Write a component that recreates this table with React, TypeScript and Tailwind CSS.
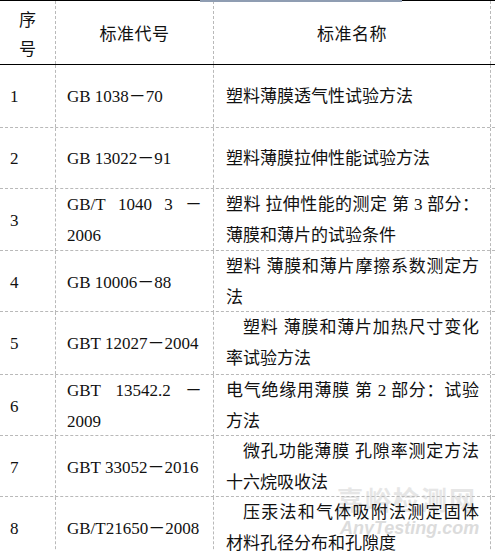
import React from 'react';

type Row = {
  no: string;
  height: string;
  code: React.ReactNode;
  name: React.ReactNode;
};

// one justified line (fills the cell width, like Word's distributed text)
function JLine({ children, indent = false }: { children: React.ReactNode; indent?: boolean }) {
  return (
    <div className={indent ? 'pl-[17px] text-justify [text-align-last:justify]' : 'text-justify [text-align-last:justify]'}>
      {children}
    </div>
  );
}

const rows: Row[] = [
  {
    no: '1',
    height: 'h-[63px]',
    code: <div>GB 1038－70</div>,
    name: <div>塑料薄膜透气性试验方法</div>,
  },
  {
    no: '2',
    height: 'h-[61px]',
    code: <div>GB 13022－91</div>,
    name: <div>塑料薄膜拉伸性能试验方法</div>,
  },
  {
    no: '3',
    height: 'h-[62px]',
    code: (
      <>
        <div className="flex justify-between">
          <span>GB/T</span>
          <span>1040</span>
          <span>3</span>
          <span>－</span>
        </div>
        <div>2006</div>
      </>
    ),
    name: (
      <>
        <JLine>塑料 拉伸性能的测定 第 3 部分：</JLine>
        <div>薄膜和薄片的试验条件</div>
      </>
    ),
  },
  {
    no: '4',
    height: 'h-[61px]',
    code: <div>GB 10006－88</div>,
    name: (
      <>
        <JLine>塑料 薄膜和薄片摩擦系数测定方</JLine>
        <div>法</div>
      </>
    ),
  },
  {
    no: '5',
    height: 'h-[63px]',
    code: <div>GBT 12027－2004</div>,
    name: (
      <>
        <JLine indent>塑料 薄膜和薄片加热尺寸变化</JLine>
        <div>率试验方法</div>
      </>
    ),
  },
  {
    no: '6',
    height: 'h-[61px]',
    code: (
      <>
        <div className="flex justify-between">
          <span>GBT</span>
          <span>13542.2</span>
          <span>－</span>
        </div>
        <div>2009</div>
      </>
    ),
    name: (
      <>
        <JLine>电气绝缘用薄膜 第 2 部分：试验</JLine>
        <div>方法</div>
      </>
    ),
  },
  {
    no: '7',
    height: 'h-[61px]',
    code: <div>GBT 33052－2016</div>,
    name: (
      <>
        <JLine indent>微孔功能薄膜 孔隙率测定方法</JLine>
        <div>十六烷吸收法</div>
      </>
    ),
  },
  {
    no: '8',
    height: 'h-[62px]',
    code: <div>GB/T21650－2008</div>,
    name: (
      <>
        <JLine indent>压汞法和气体吸附法测定固体</JLine>
        <div>材料孔径分布和孔隙度</div>
      </>
    ),
  },
];

const grid = 'grid grid-cols-[56px_158px_277px]';
const cell = 'border-r border-dashed border-[#b9b9b9] flex flex-col justify-center';

export default function App() {
  return (
    <div
      className="relative w-[495px] h-[551px] overflow-hidden bg-white text-[17px] leading-[31px] text-[#111]"
      style={{ fontFamily: '"Liberation Serif", "Noto Sans CJK SC", serif' }}
    >
      {/* watermark */}
      <div className="absolute left-[337px] top-[484px] text-[26px] leading-[30px] font-bold tracking-[2px] text-[#e6e6e6] [font-family:'Noto_Sans_CJK_SC',sans-serif]">
        嘉峪检测网
      </div>
      <div className="absolute left-[340px] top-[514px] text-[18px] leading-[28px] font-bold italic text-[#dcdcdc] [font-family:'Liberation_Sans',sans-serif]">
        AnyTesting.com
      </div>

      {/* selection bar over the top rule */}
      <div className="absolute left-[200px] top-0 w-[202px] h-[2px] bg-[#8f9db2] z-20" />

      <div className="relative">
        {/* header */}
        <div className={`${grid} h-[65px] border-t border-b border-black`}>
          <div className={`${cell} items-center leading-[29px] pt-[5px]`}>
            <div>序</div>
            <div>号</div>
          </div>
          <div className={`${cell} items-center tracking-[0.5px] pt-[3px]`}>标准代号</div>
          <div className={`${cell} items-center tracking-[0.5px] pt-[3px]`}>标准名称</div>
        </div>

        {rows.map((r) => (
          <div key={r.no} className={`${grid} ${r.height} border-b border-dashed border-[#b9b9b9]`}>
            <div className={`${cell} pl-[10px]`}>{r.no}</div>
            <div className={`${cell} pl-[11px] pr-[11px]`}>{r.code}</div>
            <div className={`${cell} pl-[12px] pr-[11px]`}>{r.name}</div>
          </div>
        ))}
      </div>
    </div>
  );
}
